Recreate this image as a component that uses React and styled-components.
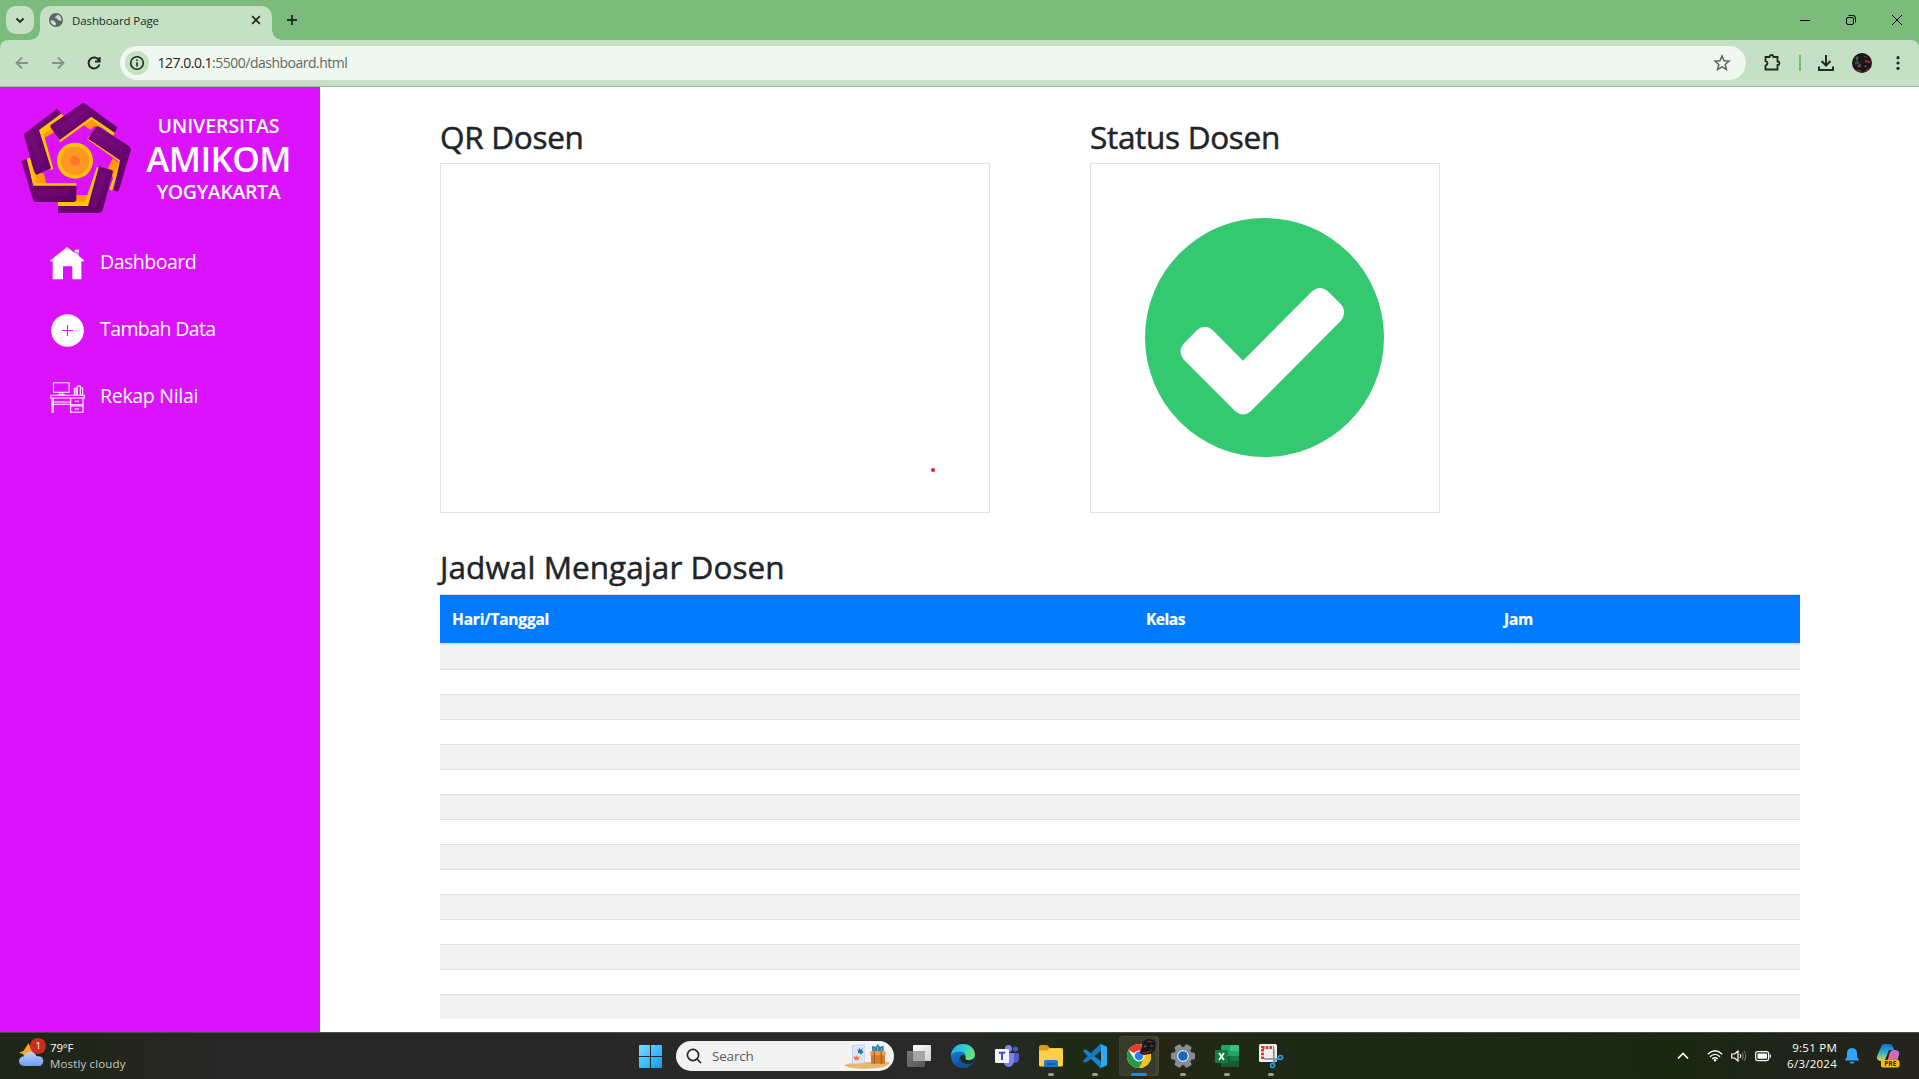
import React from "react";
import styled, { createGlobalStyle } from "styled-components";

const Global = createGlobalStyle`
  *, *::before, *::after { box-sizing: border-box; }
  html, body { margin: 0; padding: 0; height: 100%; overflow: hidden; }
  #root { height: 100vh; }
  body { font-family: "Open Sans", "Noto Sans", sans-serif; background: #fff; }
  svg { display: block; flex: none; overflow: visible; }
`;

const Screen = styled.div`
  display: flex;
  flex-direction: column;
  height: 100vh;
`;

/* ---------- browser ---------- */
const TabStrip = styled.header`
  display: flex;
  height: 40px;
  flex: none;
  padding: 6px 0 0 6px;
  background: #7bbb7c;
`;
const TabSearch = styled.button`
  display: grid;
  place-items: center;
  width: 28px;
  height: 28px;
  margin-right: 6px;
  padding: 0;
  border: 0;
  border-radius: 10px;
  background: #c5e1c5;
`;
const Tab = styled.div`
  position: relative;
  display: flex;
  align-items: center;
  width: 232px;
  height: 34px;
  padding: 0 9px 6px;
  border-radius: 10px 10px 0 0;
  background: #c5e1c5;
  &::before, &::after {
    content: "";
    position: absolute;
    bottom: 0;
    width: 10px;
    height: 10px;
  }
  &::before { left: -10px; background: radial-gradient(circle at 0 0, transparent 9.5px, #c5e1c5 10px); }
  &::after { right: -10px; background: radial-gradient(circle at 100% 0, transparent 9.5px, #c5e1c5 10px); }
`;
const TabTitle = styled.span`
  flex: 1;
  padding-top: 2px;
  margin-left: 9px;
  font-size: 11.5px;
  letter-spacing: -0.1px;
  line-height: 16px;
  color: #1f2a20;
`;
const NewTab = styled.div`
  display: grid;
  place-items: center;
  width: 28px;
  height: 28px;
  margin-left: 6px;
`;
const WindowControls = styled.div`
  display: flex;
  margin: -6px -1px 0 auto;
  height: 40px;
`;
const WindowButton = styled.div`
  display: grid;
  place-items: center;
  width: 46px;
`;
const Toolbar = styled.div`
  display: flex;
  align-items: center;
  flex: none;
  height: 47px;
  padding: 0 11px 1px 12px;
  background: #c5e1c5;
  border-bottom: 1px solid #a3b9a4;
`;
const ToolbarWrap = styled.div`
  flex: none;
  background: #7bbb7c;
  ${Toolbar} { border-radius: 8px 8px 0 0; }
`;
const NavIcons = styled.div`
  display: flex;
  gap: 16px;
  margin-right: 16px;
`;
const Omnibox = styled.div`
  display: flex;
  align-items: center;
  flex: 1;
  height: 34px;
  padding: 0 14px 0 5px;
  border-radius: 17px;
  background: #f0f7f0;
`;
const SiteInfo = styled.span`
  display: grid;
  place-items: center;
  width: 24px;
  height: 24px;
  border-radius: 50%;
  background: #c5e1c5;
`;
const Url = styled.span`
  flex: 1;
  margin-left: 8.5px;
  font-size: 14px;
  letter-spacing: -0.5px;
  line-height: 20px;
  color: #5f6b61;
  b { font-weight: 400; color: #1e2620; }
`;
const Extensions = styled.div`
  display: flex;
  align-items: center;
  margin-left: ${(p) => p.$gap || 16}px;
`;
const Divider = styled.i`
  width: 2px;
  height: 16px;
  margin: 0 16px 0 17px;
  background: #7bbb7c;
`;

/* ---------- page ---------- */
const Page = styled.div`
  display: flex;
  flex: 1;
  min-height: 0;
  overflow: hidden;
`;
const Sidebar = styled.aside`
  width: 320px;
  flex: none;
  padding: 15px 20px 0;
  background: #db12fc;
  color: #fff;
`;
const Brand = styled.div`
  display: flex;
  gap: 11px;
`;
const BrandText = styled.div`
  display: flex;
  flex-direction: column;
  align-items: center;
  width: 151px;
  padding-top: 11px;
  font-weight: 600;
`;
const BrandLine = styled.span`
  font-size: ${(p) => (p.$big ? "35px" : "19.5px")};
  line-height: ${(p) => (p.$big ? "40px" : "26px")};
  letter-spacing: ${(p) => p.$track}px;
  white-space: nowrap;
`;
const Menu = styled.nav`
  display: flex;
  flex-direction: column;
  margin-top: 16px;
  padding-left: 30px;
`;
const MenuItem = styled.a`
  display: flex;
  align-items: center;
  gap: 15px;
  height: 67px;
`;
const MenuLabel = styled.span`
  padding-bottom: 4px;
  font-size: 19.5px;
  letter-spacing: ${(p) => p.$track}px;
  line-height: 28px;
`;
const Main = styled.main`
  flex: 1;
  padding: 31px 119px 0 120px;
  color: #212529;
`;
const Panels = styled.div`
  display: flex;
  gap: 100px;
`;
const Heading = styled.h2`
  margin: 0 0 ${(p) => p.$gap || 7}px;
  font-size: 31.5px;
  font-weight: 500;
  line-height: 38px;
  letter-spacing: ${(p) => p.$track || -0.3}px;
  white-space: nowrap;
  -webkit-text-stroke: 0.5px #212529;
`;
const Frame = styled.div`
  position: relative;
  display: grid;
  place-items: center;
  width: ${(p) => p.$width}px;
  height: 350px;
  padding: 0 1px 1px 0;
  border: 1px solid #dee2e6;
`;
const LaserDot = styled.i`
  position: absolute;
  left: 490px;
  top: 304px;
  width: 4px;
  height: 4px;
  border-radius: 2px;
  background: #ee1c25;
`;
const Schedule = styled.section`
  margin-top: 35px;
`;
const Table = styled.table`
  width: 1360px;
  table-layout: fixed;
  border-spacing: 0;
`;
const Th = styled.th`
  width: ${(p) => p.$width}px;
  height: 51px;
  padding: 0 12px;
  border-top: 1px solid #dee2e6;
  border-bottom: 2px solid #dee2e6;
  background: #007bff;
  background-clip: padding-box;
  color: #fff;
  font-size: 15.5px;
  font-weight: 700;
  letter-spacing: ${(p) => p.$track}px;
  line-height: 24px;
  text-align: left;
  -webkit-text-stroke: 0.2px #fff;
`;
const Tr = styled.tr`
  background: #fff;
  td { height: 25px; padding: 0; border-top: 1px solid #dee2e6; }
  &:nth-child(odd) { background: #f2f2f2; }
  &:first-child td { height: 24px; border-top: 0; }
`;

/* ---------- taskbar ---------- */
const Taskbar = styled.footer`
  display: grid;
  grid-template-columns: 639px auto 1fr;
  flex: none;
  height: 47px;
  border-top: 1px solid #4c4c4a;
  background: linear-gradient(90deg, #1d2619 0, #222619 90px, #272727 220px, #292929 950px, #1f2a17 1080px, #262714 1150px, #1c2a15 1300px, #1a2812 1690px, #202419 1780px, #25231d 1919px);
  color: #fff;
`;
const Weather = styled.div`
  display: flex;
  gap: 6px;
  padding: 5px 0 0 19px;
`;
const WeatherText = styled.div`
  display: flex;
  flex-direction: column;
  padding-top: 2px;
  font-size: 11.5px;
  line-height: 16px;
  letter-spacing: 0.15px;
  color: #c6c8c4;
  b { font-weight: 400; color: #fff; letter-spacing: -0.2px; }
`;
const Apps = styled.div`
  display: flex;
  align-items: center;
  height: 46px;
`;
const SearchPill = styled.div`
  display: flex;
  align-items: center;
  width: 218px;
  height: 30px;
  margin: 0 3px 0 14px;
  padding: 0 3px 0 10px;
  border-radius: 15px;
  background: #f2f2f2;
  color: #5b5b5b;
  font-size: 13.5px;
  letter-spacing: -0.2px;
  span { flex: 1; margin-left: 10px; }
`;
const AppButton = styled.div`
  position: relative;
  display: grid;
  place-items: center;
  width: 40px;
  height: 40px;
  margin-left: ${(p) => (p.$first ? "2px" : "4px")};
  border-radius: 4px;
  background: ${(p) => (p.$active ? "rgba(255,255,255,.09)" : "none")};
  box-shadow: ${(p) => (p.$active ? "inset -5px 0 0 -1px rgba(255,255,255,.05), inset 0 0 0 1px rgba(255,255,255,.05)" : "none")};
  &::after {
    content: "";
    position: absolute;
    bottom: 0;
    left: 50%;
    width: ${(p) => (p.$active ? 16 : 6)}px;
    height: 3px;
    border-radius: 2px;
    transform: translateX(-50%);
    background: ${(p) => (p.$active ? "#1090f5" : "#9b9d98")};
    display: ${(p) => (p.$running || p.$active ? "block" : "none")};
  }
`;
const Tray = styled.div`
  display: flex;
  align-items: center;
  justify-content: flex-end;
  padding-right: 19px;
`;
const TrayIcons = styled.div`
  display: flex;
  align-items: center;
  gap: 8px;
  margin: 0 16px 0 18px;
`;
const Clock = styled.div`
  display: flex;
  flex-direction: column;
  align-items: flex-end;
  font-size: 11.5px;
  line-height: 16px;
  letter-spacing: ${0.25}px;
  margin-right: 8px;
`;
const TrayEnd = styled.div`
  display: flex;
  align-items: center;
  gap: 17px;
`;

/* ---------- drawings ---------- */
const Line = ({ w = 16, h = w, box = `0 0 ${w} ${h}`, c = "#1f2a20", sw = 1.8, children }) => (
  <svg width={w} height={h} viewBox={box} fill="none" stroke={c} strokeWidth={sw}>{children}</svg>
);

const Logo = () => (
  <svg width="112" height="112" viewBox="60 51 336 336">
    <defs>
      <linearGradient id="arm" x1="0" y1="0" x2="1" y2="1">
        <stop offset="0" stopColor="#7a0a7d" />
        <stop offset="1" stopColor="#5b0063" />
      </linearGradient>
    </defs>
    <g fill="#ff9a00">
      <path d="M122 152L160 122L166 140L131 160Z" />
      <path d="M245 117L268 100L306 128L282 124L272 134Z" />
      <path d="M338 220L361 236L344 284L322 255Z" />
      <path d="M228 330H264L258 352H222Z" />
      <path d="M96 240L116 262L132 266L140 300H106Z" />
    </g>
    <g fill="#ffc400">
      <path d="M183 86L190 92L189 104L131 147L160 251L152 256L116 135Z" />
      <path d="M176 164L272 94L347 140L339 152L274 104L181 172Z" />
      <path d="M262 163L357 230L328 312L336 318L366 222L268 152Z" />
      <path d="M174 363V350H255L291 245L300 250L266 366Z" />
      <path d="M80 221L91 218L109 295H229V303H100Z" />
    </g>
    <g fill="url(#arm)">
      <path d="M171 71L183 84L181 88L117 135L153 250L110 269Q104 266 101 255L71 148Z" />
      <path d="M247 55Q251 52 256 56L352 127L345 144L274 95L179 165L151 126Q150 122 153 119Z" />
      <path d="M288 125L294 124L388 184Q394 190 392 198L357 315Q354 320 348 319L341 315L360 226L264 161Z" />
      <path d="M297 244L337 256Q340 259 338 264L308 376Q304 384 296 384H174V363H264Z" />
      <path d="M64 229L80 221L99 302H229V345Q228 350 222 351H108Q101 350 99 344Z" />
    </g>
    <g fill="#860f8b" opacity=".28">
      <path d="M82 151L96 142L139 238L115 243Z" />
      <path d="M174 126L246 73L258 82L188 141Z" />
      <path d="M283 147L303 143L370 188L365 205Z" />
      <path d="M303 262L322 266L291 366L270 365Z" />
      <path d="M105 317L209 309Q214 325 204 334H116Z" />
    </g>
    <circle cx="225" cy="227" r="54" fill="#ffc400" />
    <circle cx="225" cy="227" r="43" fill="#ff9820" />
    <circle cx="225" cy="228" r="15" fill="#ff762c" />
  </svg>
);

const HomeIcon = () => (
  <svg width="35" height="35" viewBox="0 0 105 105" fill="#fff">
    <path d="M0 44L51 3L74 21V11H87V31L102 43L99 47L94 44V100H67V61H39V100H8V44L3 47Z" />
    <path d="M74 19L87 30V17H74Z" fill="#db12fc" opacity=".55" />
  </svg>
);
const PlusIcon = () => (
  <svg width="35" height="35" viewBox="0 0 105 105">
    <circle cx="52.5" cy="52.5" r="49" fill="#fff" />
    <path d="M36 52.5H69M52.5 36V69" stroke="#db12fc" strokeWidth="3.2" />
  </svg>
);
const DeskIcon = () => (
  <svg width="35" height="35" viewBox="0 0 105 105" fill="none" stroke="#fff" strokeWidth="3.2">
    <path d="M10.5 8H57.5V37H10.5ZM30 37V45M38 37V45M23 45H45M73 45V25H82V45M82 45V18H91V45M91 24H98V45M78 25V45" />
    <path d="M2 46H103V54H2ZM6 54V98M10 54V98M10 66H62M6 73H62M62 54V98M62 97H99V54M62 74H99M62 78H99M74 64H87M74 87H87" />
  </svg>
);
const CheckBadge = () => (
  <svg width="239" height="239" viewBox="0 0 717 717">
    <circle cx="358.5" cy="358.5" r="358.5" fill="#34c871" />
    <path d="M294 428L503 218Q525 202 547 218L590 261Q605 281 590 306L317 580Q294 599 271 580L115 424Q98 400 115 378L157 335Q179 318 202 335Z" fill="#fff" />
  </svg>
);

const Globe = () => (
  <svg width="14" height="14" viewBox="0 0 14 14">
    <circle cx="7" cy="7" r="7" fill="#5f6368" />
    <path d="M1.5 7.5C3.5 7 5.5 7.8 6 9.2C7.5 9.5 7.2 11 6.5 12.6C3.5 12.3 1.7 10.3 1.5 7.5ZM8.5 1.7C11 2.2 12.5 4.3 12.5 7C12 8.6 10.7 8 9.9 7.1C8.5 6.8 8 6.3 8.3 5.4C6.8 5 5.7 5.2 5.9 3.9C7.3 3.7 7.2 2.7 8.5 1.7Z" fill="#c5e1c5" />
  </svg>
);
const Avatar = ({ size = 20 }) => (
  <svg width={size} height={size} viewBox="0 0 20 20">
    <circle cx="10" cy="10" r="10" fill="#17161a" />
    <path d="M11 2.5Q15 3 17 5L13 4.500ZM12.500 6.500L18.500 8V10.500L13 9.500Z" fill="#8e2629" />
    <path d="M3.500 4.500L6 3L6.500 6L4 8ZM5 13L8 10L9.500 14L6 14.500ZM12 12.500L16 13L13 14.500Z" fill="#5b5257" />
    <path d="M3.500 16.500L8 17L10 18.200L7 18.800ZM13 17.500L17.500 14.500L16 17.300L12 19Z" fill="#b81f24" />
    <path d="M2.500 9L6 7.500L7.500 10L3.500 12Z" fill="#474048" />
  </svg>
);

const WeatherIcon = () => (
  <svg width="25" height="30" viewBox="0 0 75 90">
    <defs>
      <linearGradient id="cloud" x1="0" y1="0" x2="0" y2="1">
        <stop offset="0" stopColor="#b8d2ff" /><stop offset="1" stopColor="#719eea" />
      </linearGradient>
    </defs>
    <path d="M28 16L34 26L48 24L44 50L16 56L12 48L0 44L14 38Z" fill="#f6a623" />
    <path d="M15 84Q1 83 0 70Q1 56 15 55Q20 41 35 42Q48 43 53 55Q71 53 73 68Q72 83 58 84Z" fill="url(#cloud)" />
    <circle cx="57" cy="24" r="24" fill="#c92d1f" />
    <text x="58" y="34" fontSize="29" fill="#fff" textAnchor="middle" fontFamily="Open Sans, sans-serif">1</text>
  </svg>
);
const WindowsIcon = () => (
  <svg width="23" height="23" viewBox="0 0 23 23">
    <defs>
      <linearGradient id="win" x1="0" y1="0" x2="1" y2="1" gradientUnits="objectBoundingBox">
        <stop offset="0" stopColor="#7ddcff" /><stop offset="1" stopColor="#0c9cf5" />
      </linearGradient>
    </defs>
    <path d="M0 1Q0 0 1 0H11V11H0ZM12 0H22Q23 0 23 1V11H12ZM0 12H11V23H1Q0 23 0 22ZM12 12H23V22Q23 23 22 23H12Z" fill="url(#win)" />
  </svg>
);
const Gifts = () => (
  <svg width="47" height="25" viewBox="0 0 141 75">
    <path d="M0 64Q20 56 60 55L137 54Q135 70 95 73Q30 76 14 70Z" fill="#e8b66c" />
    <path d="M24 3L62 1V58L24 61Z" fill="#bfcdf0" />
    <path d="M27 5L60 3V56L27 59Z" fill="#dde5fb" />
    <path d="M40 14L45 19L46 10L50 18L56 12L54 20L59 23L52 31L43 27Z" fill="#1c7fa8" />
    <path d="M29 36L35 40L36 32L40 40L47 37L43 49L34 49L30 44Z" fill="#ee7a41" />
    <path d="M81 24H123V59H81Z" fill="#d9792c" />
    <path d="M79 22H125V34H79Z" fill="#ee9a46" />
    <path d="M91 22V59M112 22V59" stroke="#b65a1b" strokeWidth="4" />
    <path d="M84 6L95 9L101 0L108 8L119 5V22H84Z" fill="#347ea6" />
    <path d="M90 22V12M101 22V8M112 22V12" stroke="#75b7d3" strokeWidth="3" />
  </svg>
);
const TaskView = () => (
  <svg width="24" height="22" viewBox="0 0 24 22">
    <defs>
      <linearGradient id="tvw" x1="0" y1="0" x2="1" y2="1"><stop offset="0" stopColor="#fff" /><stop offset="1" stopColor="#d0d0d0" /></linearGradient>
      <linearGradient id="tvg" x1="0" y1="0" x2="1" y2="1"><stop offset="0" stopColor="#777" /><stop offset="1" stopColor="#555" /></linearGradient>
    </defs>
    <rect y="6" width="18" height="16" rx="1" fill="url(#tvg)" />
    <rect x="6" width="18" height="16" rx="1" fill="url(#tvw)" />
    <path d="M6 6H18V16H6Z" fill="#a5a5a5" />
  </svg>
);
const EdgeIcon = () => (
  <svg width="24" height="24" viewBox="0 0 24 24">
    <defs>
      <linearGradient id="ed1" x1="0" y1="0" x2="1" y2=".4"><stop offset="0" stopColor="#25a6e8" /><stop offset=".6" stopColor="#37cbd0" /><stop offset="1" stopColor="#6ee36a" /></linearGradient>
      <linearGradient id="ed2" x1="0" y1="0" x2=".4" y2="1"><stop offset="0" stopColor="#1b8fe3" /><stop offset="1" stopColor="#0f4fa8" /></linearGradient>
    </defs>
    <circle cx="12" cy="12" r="12" fill="url(#ed2)" />
    <path d="M0 11.5C.6 4.800 5.800 0 12 0C19 0 24 4.800 24 10.600C24 14 21.200 16.200 18.200 16.200C15.500 16.200 14 15.200 14.200 14.200C15.600 12.400 14.400 8.200 10 7.600C5.500 7.100 1.500 8.600 0 11.500Z" fill="url(#ed1)" />
    <path d="M9 13.500C8.600 18 12.500 20.800 17 20.300C19.500 20 21 19 21.600 19C19 23 14.800 24.400 11 23.900C7 22.500 5.500 17.500 9 13.500Z" fill="#174f9c" />
    <path d="M14.200 14.200C14 15.200 15.500 16.200 18.200 16.200C20 16.200 21.700 15.600 22.900 14.300L22 18.500C18 21 9.500 20.500 9 13.500C9.500 12 10.500 11.200 12 11C14.500 11.200 14.900 13.200 14.200 14.200Z" fill="#20251f" />
  </svg>
);
const TeamsIcon = () => (
  <svg width="24" height="22" viewBox="0 0 24 22">
    <circle cx="20.500" cy="4" r="2.600" fill="#5059c9" /><circle cx="13.500" cy="3.600" r="3.600" fill="#7b83eb" />
    <path d="M17 8H24V14Q23.500 18 19.500 18H17Z" fill="#5059c9" />
    <path d="M8 8H19V16Q18.500 21.500 13.500 22Q9 21.500 8 16Z" fill="#7b83eb" />
    <rect y="4" width="14" height="14" rx="1.200" fill="#f4f4fb" />
    <path d="M3.800 7.800H10.200M7 7.800V15" stroke="#464eb8" strokeWidth="2" />
  </svg>
);
const FolderIcon = () => (
  <svg width="24" height="22" viewBox="0 0 24 22">
    <path d="M0 2Q0 0 2 0H8L11 3H22Q24 3 24 5V9H0Z" fill="#d99a12" />
    <path d="M0 5.500H8L10.500 3.200H22.500Q24 3.200 24 5V20Q24 21.500 22.500 21.500H1.500Q0 21.500 0 20Z" fill="#fdd047" />
    <path d="M5 22V17Q5 15 7 15H17Q19 15 19 17V22Z" fill="#1379d3" />
    <path d="M8 19H16" stroke="#0a4f98" strokeWidth="1.500" />
  </svg>
);
const CodeIcon = () => (
  <svg width="24" height="24" viewBox="0 0 24 24">
    <path d="M17.500 0L7.800 9.300L2.500 5.200L.3 6.400V7.500L4.800 12L.3 16.500V17.600L2.500 18.800L7.800 14.700L17.500 24L18 17.200L11.300 12L18 6.800Z" fill="#1585cf" />
    <path d="M17.500 0L24 2.800V21.200L17.500 24L16.500 23L18 21V3L16.500 1Z" fill="#2aaaf2" />
    <path d="M17.500 0L18 6.500L4 18L1.800 18.400L.3 17.100Z" fill="#1173b8" opacity=".6" />
  </svg>
);
const ChromeIcon = () => (
  <svg width="24" height="24" viewBox="0 0 24 24">
    <circle cx="12" cy="12" r="12" fill="#fff" />
    <path d="M12 12L1.600 6A12 12 0 0 1 22.400 6Z" fill="#e33b2e" />
    <path d="M12 6.500H22.700A12 12 0 0 1 12 24L17 14.500Z" fill="#fbc116" />
    <path d="M1.600 6A12 12 0 0 0 12 24L16.800 15L7.200 15Z" fill="#279847" />
    <circle cx="12" cy="12" r="5.500" fill="#fff" /><circle cx="12" cy="12" r="4.400" fill="#2d7cf0" />
    <g transform="translate(12.500 -5.500) scale(.82)">
      <path d="M4 4L10 0L18 2L20 5L19 14L13 19L5 20L0 17L3 11Z" fill="#17161a" />
      <path d="M8 4L12 2.500L17 4L14 5ZM1 16L9 16.500L17 12.500L13 16.500L6 18.500Z" fill="#86242a" />
      <path d="M5 9L8 7L9 10L5 12ZM13 8L18 9L17 10.500L13 10Z" fill="#48434a" />
    </g>
  </svg>
);
const GearIcon = () => (
  <svg width="24" height="24" viewBox="-12 -12 24 24">
    <g fill="#858c95">
      {[0, 60, 120].map((a) => <rect key={a} x="-3.600" y="-12" width="7.200" height="24" rx="1.600" transform={`rotate(${a + 30})`} />)}
      <circle r="9.300" />
    </g>
    <circle r="5.800" fill="#fff" /><circle r="4.800" fill="#0f6cbd" />
  </svg>
);
const ExcelIcon = () => (
  <svg width="24" height="22" viewBox="0 0 24 22">
    <rect x="6" width="18" height="22" rx="1.500" fill="#21a366" />
    <path d="M15 0H22.500Q24 0 24 1.500V6H15Z" fill="#33c481" />
    <path d="M6 11H15V22H7.500Q6 22 6 20.500Z" fill="#185c37" /><path d="M15 11H24V16H15Z" fill="#107c41" />
    <path d="M15 16H24V20.500Q24 22 22.500 22H15Z" fill="#185c37" />
    <rect y="5" width="13" height="13" rx="1" fill="#107c41" />
    <path d="M4 8L9 15M9 8L4 15" stroke="#fff" strokeWidth="1.800" />
  </svg>
);
const SnipIcon = () => (
  <svg width="24" height="24" viewBox="0 0 24 24" fill="none">
    <rect width="18" height="18" rx="1.500" fill="#eeeef0" />
    <path d="M3.500 15V3.500H15" stroke="#d93a20" strokeWidth="3" strokeDasharray="2.500 1.200" />
    <path d="M14.800 5V18M5 14.800H19" stroke="#92969c" strokeWidth="1.800" />
    <circle cx="21.500" cy="13.500" r="2" stroke="#29a3e8" strokeWidth="1.600" /><circle cx="13.500" cy="21.500" r="2" stroke="#29a3e8" strokeWidth="1.600" />
    <path d="M19.500 14.500L16 16M14.500 19.500L16 16" stroke="#29a3e8" strokeWidth="1.600" />
  </svg>
);
const CopilotIcon = () => (
  <svg width="24" height="24" viewBox="0 0 24 24">
    <defs>
      <linearGradient id="cp1" x1="0" y1="0" x2="0" y2="1"><stop offset="0" stopColor="#1468d8" /><stop offset=".5" stopColor="#2bb6c4" /><stop offset="1" stopColor="#e8d53a" /></linearGradient>
      <linearGradient id="cp2" x1="1" y1="0" x2="0" y2="1"><stop offset="0" stopColor="#b56df0" /><stop offset="1" stopColor="#f2607e" /></linearGradient>
    </defs>
    <path d="M6 1Q7 0 9 0H14Q16 0 17 3L18 6H13L9 16Q8 18 4 17Q0 16 1 12Z" fill="url(#cp1)" />
    <path d="M14 8Q15 6 18 6H20Q24 7 23 11L21 18H11Z" fill="url(#cp2)" />
    <rect x="5" y="16" width="18.500" height="7.500" rx="2" fill="#f9bd14" />
    <text x="14.300" y="22.300" fontSize="6.500" fontWeight="700" textAnchor="middle" fill="#2b210a" fontFamily="Open Sans, sans-serif">PRE</text>
  </svg>
);

const apps = [
  { icon: TaskView }, { icon: EdgeIcon }, { icon: TeamsIcon },
  { icon: FolderIcon, running: true }, { icon: CodeIcon, running: true },
  { icon: ChromeIcon, active: true }, { icon: GearIcon, running: true },
  { icon: ExcelIcon, running: true }, { icon: SnipIcon, running: true },
];
const menu = [
  { label: "Dashboard", icon: HomeIcon, track: -0.5 },
  { label: "Tambah Data", icon: PlusIcon, track: -0.6 },
  { label: "Rekap Nilai", icon: DeskIcon, track: -0.3 },
];

function Browser() {
  return (
    <>
      <TabStrip>
        <TabSearch><Line w={10} sw={1.900}><path d="M1.500 3.500L5 7L8.500 3.500" /></Line></TabSearch>
        <Tab>
          <Globe />
          <TabTitle>Dashboard Page</TabTitle>
          <Line w={14} sw={1.700}><path d="M3.200 3.200L10.800 10.800M10.800 3.200L3.200 10.800" /></Line>
        </Tab>
        <NewTab><Line w={12}><path d="M6 1V11M1 6H11" /></Line></NewTab>
        <WindowControls>
          <WindowButton><Line w={10} c="#000" sw={1}><path d="M0 5.500H10" /></Line></WindowButton>
          <WindowButton><Line w={10} c="#000" sw={1}><rect x=".5" y="2.500" width="7" height="7" rx="1.500" /><path d="M2.500 .5H7Q9.500 .5 9.500 3V7.500" /></Line></WindowButton>
          <WindowButton><Line w={10} c="#000" sw={1}><path d="M0 0L10 10M10 0L0 10" /></Line></WindowButton>
        </WindowControls>
      </TabStrip>
      <ToolbarWrap>
        <Toolbar>
          <NavIcons>
            <Line w={20} c="#829584"><path d="M16 10H5M10 4.500L4.500 10L10 15.500" /></Line>
            <Line w={20} c="#829584"><path d="M4 10H15M10 4.500L15.500 10L10 15.500" /></Line>
            <Line w={20} sw={2}><path d="M15 7.500A5.500 5.500 0 1 0 15.400 11.500M15.600 4V8.500H11" /></Line>
          </NavIcons>
          <Omnibox>
            <SiteInfo><Line w={16} sw={1.600}><circle cx="8" cy="8" r="6.300" /><path d="M8 7.200V11.500M8 4.500V6" /></Line></SiteInfo>
            <Url><b>127.0.0.1</b>:5500/dashboard.html</Url>
            <Line w={20} c="#5a6660" sw={1.500}><path d="M10 3L12 7.800L17 8.200L13.200 11.500L14.400 16.500L10 13.800L5.600 16.500L6.800 11.500L3 8.200L8 7.800Z" /></Line>
          </Omnibox>
          <Extensions>
            <Line w={20}><path d="M3.500 4H7.500V3.500Q8 2 9.500 2Q11 2 11.500 3.500V4H15.500V8.500Q17.500 8.500 17.500 10.200Q17.500 12 15.500 12V16.500H3.500V12.500Q5.500 12 5.500 10.300Q5.500 8.600 3.500 8.200Z" /></Line>
            <Divider />
            <Line w={18} sw={2}><path d="M9 1V11M4.500 7L9 11.500L13.500 7M2 12.500V16H16V12.500" /></Line>
          </Extensions>
          <Extensions $gap={17}><Avatar /></Extensions>
          <Extensions>
            <svg width="20" height="20" viewBox="0 0 20 20" fill="#1f2a20"><circle cx="10" cy="4.700" r="1.600" /><circle cx="10" cy="10" r="1.600" /><circle cx="10" cy="15.300" r="1.600" /></svg>
          </Extensions>
        </Toolbar>
      </ToolbarWrap>
    </>
  );
}

function Dashboard() {
  return (
    <Page>
      <Sidebar>
        <Brand>
          <Logo />
          <BrandText>
            <BrandLine $track={-0.05}>UNIVERSITAS</BrandLine>
            <BrandLine $big $track={-0.6}>AMIKOM</BrandLine>
            <BrandLine $track={-0.35}>YOGYAKARTA</BrandLine>
          </BrandText>
        </Brand>
        <Menu>
          {menu.map(({ label, icon: Icon, track }) => (
            <MenuItem key={label}><Icon /><MenuLabel $track={track}>{label}</MenuLabel></MenuItem>
          ))}
        </Menu>
      </Sidebar>
      <Main>
        <Panels>
          <section><Heading>QR Dosen</Heading><Frame $width={550}><LaserDot /></Frame></section>
          <section><Heading>Status Dosen</Heading><Frame $width={350}><CheckBadge /></Frame></section>
        </Panels>
        <Schedule>
          <Heading $gap={8} $track={0.05}>Jadwal Mengajar Dosen</Heading>
          <Table>
            <thead>
              <tr>
                <Th $width={694} $track={-0.2}>Hari/Tanggal</Th>
                <Th $width={358} $track={-0.45}>Kelas</Th>
                <Th $width={308} $track={-0.2}>Jam</Th>
              </tr>
            </thead>
            <tbody>
              {Array.from({ length: 15 }, (_, i) => <Tr key={i}><td /><td /><td /></Tr>)}
            </tbody>
          </Table>
        </Schedule>
      </Main>
    </Page>
  );
}

function Desktop() {
  return (
    <Taskbar>
      <Weather>
        <WeatherIcon />
        <WeatherText><b>79°F</b><span>Mostly cloudy</span></WeatherText>
      </Weather>
      <Apps>
        <WindowsIcon />
        <SearchPill>
          <Line w={16} c="#2a2a2a" sw={1.700}><circle cx="7" cy="7" r="5.600" /><path d="M11 11L15 15" /></Line>
          <span>Search</span>
          <Gifts />
        </SearchPill>
        {apps.map(({ icon: Icon, running, active }, i) => (
          <AppButton key={i} $first={i === 0} $running={running} $active={active}><Icon /></AppButton>
        ))}
      </Apps>
      <Tray>
        <Line w={12} c="#fff" sw={1.600}><path d="M1 8.500L6 3.500L11 8.500" /></Line>
        <TrayIcons>
          <Line w={16} c="#fff" sw={1.300}>
            <path d="M.8 6.200Q8 -.6 15.200 6.200M3 8.700Q8 4 13 8.700M5.200 11Q8 8.500 10.800 11" />
            <circle cx="8" cy="12.300" r="1.200" fill="#fff" stroke="none" />
          </Line>
          <Line w={16} c="#fff" sw={1.200}>
            <path d="M.8 6H3.500L7 3V13L3.500 10H.8ZM9 6Q10.500 8 9 10" />
            <path d="M11 4.500Q13.500 8 11 11.500M13 3Q16.500 8 13 13" stroke="#687064" />
          </Line>
          <Line w={16} c="#fff" sw={1.200}>
            <rect x=".6" y="3.600" width="13" height="9" rx="2" /><rect x="2.500" y="5.500" width="9.500" height="5.200" rx=".6" fill="#fff" stroke="none" /><path d="M15.300 6.500V9.700" />
          </Line>
        </TrayIcons>
        <Clock><span>9:51 PM</span><span>6/3/2024</span></Clock>
        <TrayEnd>
          <svg width="14" height="16" viewBox="0 0 14 16" fill="#33a3fb"><path d="M7 0Q12 .5 12 5V9L14 12V12.500H0V12L2 9V5Q2 .5 7 0ZM4.500 13.700H9.500Q9 15.800 7 15.800Q5 15.800 4.500 13.700Z" /></svg>
          <CopilotIcon />
        </TrayEnd>
      </Tray>
    </Taskbar>
  );
}

export default function App() {
  return (
    <Screen>
      <Global />
      <Browser />
      <Dashboard />
      <Desktop />
    </Screen>
  );
}
